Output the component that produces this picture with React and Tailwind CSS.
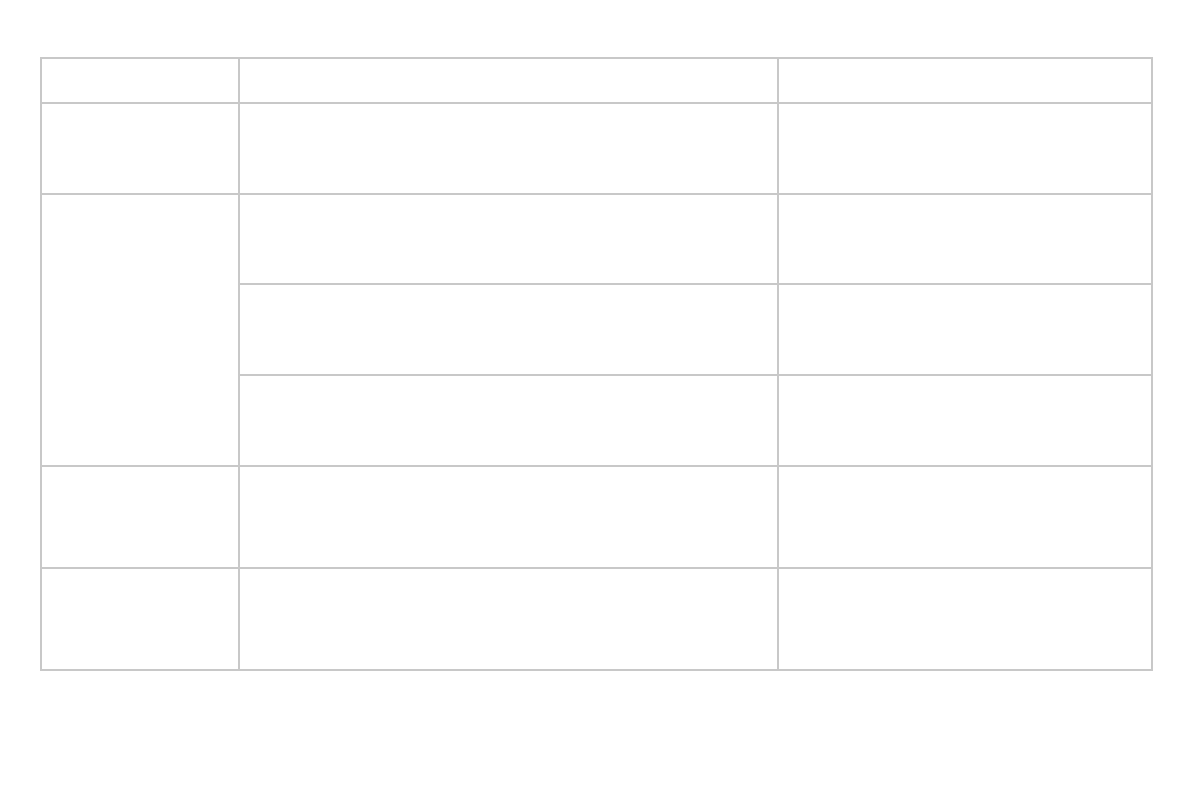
import React from 'react';

const rows = [
  { h: 'h-[89px]', span: false },
  { h: 'h-[88px]', span: true },
  { h: 'h-[89px]', span: null },
  { h: 'h-[89px]', span: null },
  { h: 'h-[100px]', span: false },
  { h: 'h-[100px]', span: false },
];

const Cell = ({ className = '' }) => <div className={`bg-white ${className}`} />;

export default function App() {
  return (
    <div className="min-h-screen bg-white pt-[57px] pl-10 font-['Liberation_Sans',sans-serif]">
      <div className="grid w-[1113px] grid-cols-[196px_537px_372px] gap-[2px] bg-[#c8c8c8] p-[2px]">
        {/* header */}
        <Cell className="h-[43px]" />
        <Cell className="h-[43px]" />
        <Cell className="h-[43px]" />

        {/* row 1 */}
        <Cell className="h-[89px]" />
        <Cell className="h-[89px]" />
        <Cell className="h-[89px]" />

        {/* grouped rows */}
        <Cell className="row-span-3" />
        <Cell className="h-[88px]" />
        <Cell className="h-[88px]" />
        <Cell className="h-[89px]" />
        <Cell className="h-[89px]" />
        <Cell className="h-[89px]" />
        <Cell className="h-[89px]" />

        {/* last rows */}
        <Cell className="h-[100px]" />
        <Cell className="h-[100px]" />
        <Cell className="h-[100px]" />
        <Cell className="h-[100px]" />
        <Cell className="h-[100px]" />
        <Cell className="h-[100px]" />
      </div>
    </div>
  );
}
